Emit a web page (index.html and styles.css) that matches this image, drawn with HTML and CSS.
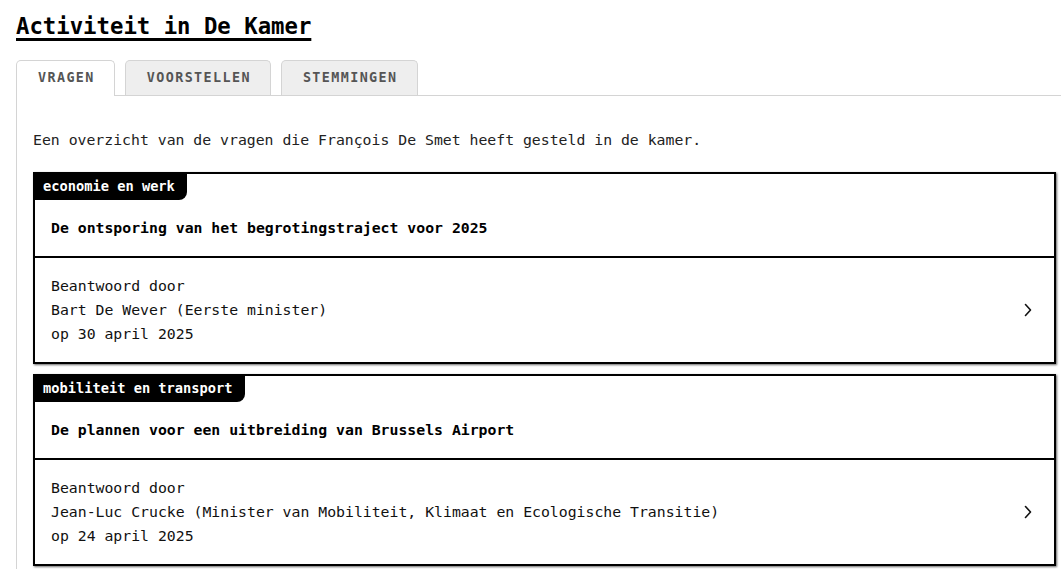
FILE: index.html
```html
<!DOCTYPE html>
<html lang="nl">
<head>
<meta charset="utf-8">
<title>Activiteit in De Kamer</title>
<link rel="stylesheet" href="styles.css">
</head>
<body>
<main class="page">
  <h2 class="heading">Activiteit in De Kamer</h2>
  <nav class="tabs">
    <span class="tab tab-active">VRAGEN</span>
    <span class="tab">VOORSTELLEN</span>
    <span class="tab">STEMMINGEN</span>
  </nav>
  <section class="panel">
    <p class="intro">Een overzicht van de vragen die François De Smet heeft gesteld in de kamer.</p>
    <article class="card">
      <div class="card-head">
        <span class="tag">economie en werk</span>
        <h3 class="card-title">De ontsporing van het begrotingstraject voor 2025</h3>
      </div>
      <div class="card-body">
        <div class="meta">
          <div>Beantwoord door</div>
          <div>Bart De Wever (Eerste minister)</div>
          <div>op 30 april 2025</div>
        </div>
        <svg class="chev" width="8" height="14" viewBox="0 0 8 14"><path d="M1.5 1.5 L6.5 7 L1.5 12.5" fill="none" stroke="#111" stroke-width="1.6" stroke-linecap="round" stroke-linejoin="round"/></svg>
      </div>
    </article>
    <article class="card">
      <div class="card-head">
        <span class="tag">mobiliteit en transport</span>
        <h3 class="card-title">De plannen voor een uitbreiding van Brussels Airport</h3>
      </div>
      <div class="card-body">
        <div class="meta">
          <div>Beantwoord door</div>
          <div>Jean-Luc Crucke (Minister van Mobiliteit, Klimaat en Ecologische Transitie)</div>
          <div>op 24 april 2025</div>
        </div>
        <svg class="chev" width="8" height="14" viewBox="0 0 8 14"><path d="M1.5 1.5 L6.5 7 L1.5 12.5" fill="none" stroke="#111" stroke-width="1.6" stroke-linecap="round" stroke-linejoin="round"/></svg>
      </div>
    </article>
  </section>
</main>
</body>
</html>
```

FILE: styles.css
```css
html, body {
  margin: 0;
  padding: 0;
  background: #fff;
  overflow: hidden;
}

body {
  font-family: "DejaVu Sans Mono", "Liberation Mono", monospace;
  color: #111;
}

.page {
  padding: 12px 0 0 16px;
}

.heading {
  margin: 0;
  font-size: 22.3px;
  line-height: 28px;
  font-weight: bold;
  color: #000;
  text-decoration: underline;
  text-decoration-thickness: 3px;
  text-underline-offset: 4px;
}

.tabs {
  display: flex;
  gap: 10px;
  margin-top: 20px;
  border-bottom: 1px solid #d4d4d4;
  align-items: flex-end;
}

.tab {
  display: block;
  height: 34px;
  line-height: 34px;
  padding: 0 19px 0 21px;
  font-size: 13.4px;
  font-weight: bold;
  letter-spacing: 1.4px;
  color: #555;
  background: #eee;
  border: 1px solid #d4d4d4;
  border-bottom: none;
  border-radius: 5px 5px 0 0;
}

.tab-active {
  background: #fff;
  height: 35px;
  margin-bottom: -1px;
}

.panel {
  border-left: 1px solid #d4d4d4;
  padding: 32px 5px 20px 16px;
}

.intro {
  margin: 0 0 20px;
  font-size: 14.8px;
  line-height: 24px;
  color: #222;
}

.card {
  border: 2px solid #000;
  box-shadow: 1px 1px 2px rgba(0, 0, 0, 0.6);
  margin-bottom: 10px;
  background: #fff;
}

.card-head {
  border-bottom: 2px solid #000;
}

.tag {
  display: inline-block;
  margin: -2px 0 0 -2px;
  padding: 0 12px 0 10px;
  height: 28px;
  line-height: 28px;
  font-size: 13.7px;
  font-weight: bold;
  color: #fff;
  background: #000;
  border-bottom-right-radius: 8px;
  vertical-align: top;
}

.card-title {
  margin: 0;
  padding: 16px;
  font-size: 14.8px;
  line-height: 24px;
  font-weight: bold;
  color: #000;
}

.card-body {
  display: flex;
  align-items: center;
  justify-content: space-between;
  padding: 16px 22px 16px 16px;
}

.meta {
  font-size: 14.8px;
  line-height: 24px;
  color: #111;
}

.chev {
  display: block;
  flex: none;
}
```
